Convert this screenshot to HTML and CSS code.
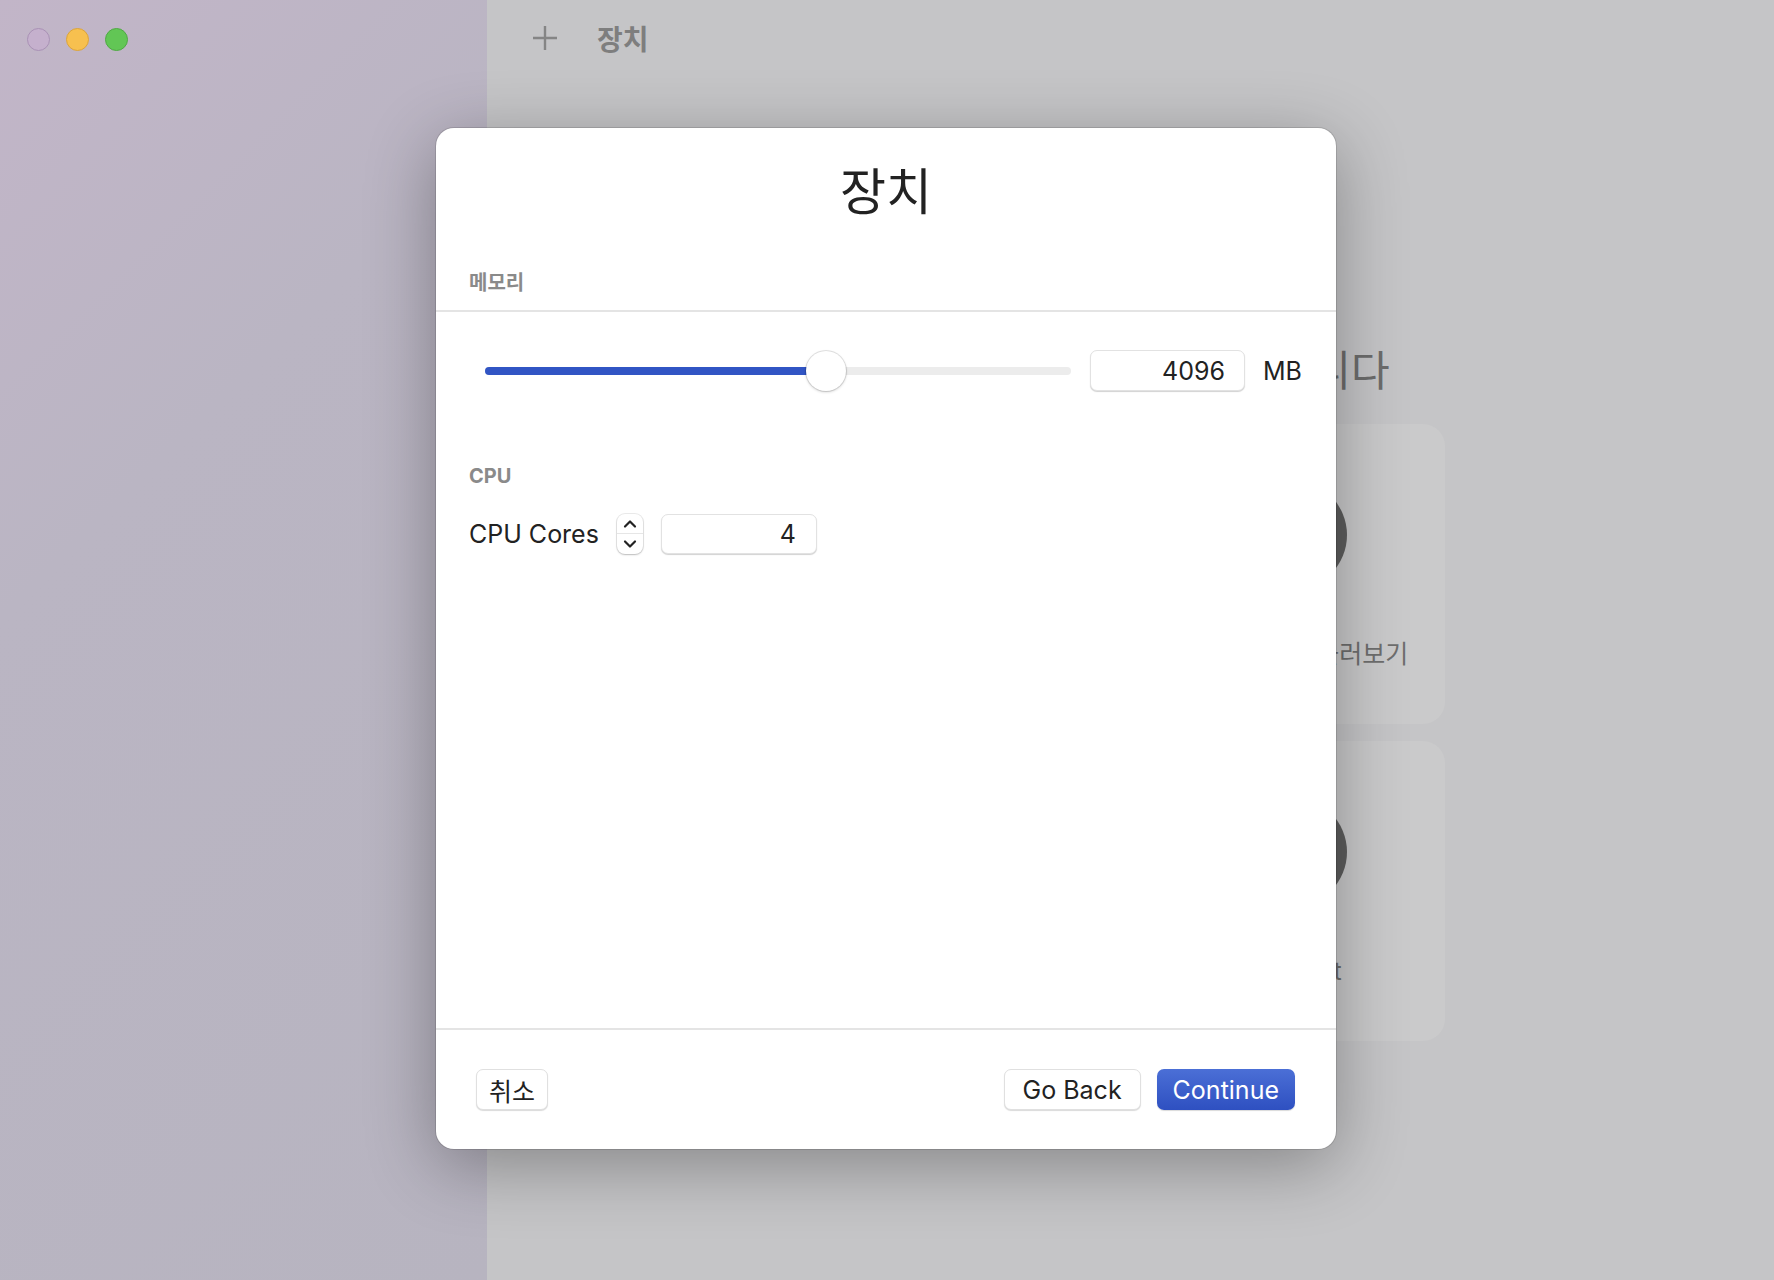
FILE: index.html
```html
<!DOCTYPE html>
<html lang="ko">
<head>
    <meta charset="UTF-8">
    <title>장치</title>
    <link rel="stylesheet" href="styles.css">
</head>
<body>
<div class="window">

    <!-- Sidebar -->
    <aside class="sidebar">
        <div class="traffic">
            <span class="light light-close"></span>
            <span class="light light-min"></span>
            <span class="light light-max"></span>
        </div>
    </aside>

    <!-- Main area (behind the sheet) -->
    <main class="main">
        <header class="toolbar">
            <svg class="toolbar-plus" width="26" height="26" viewBox="0 0 26 26">
                <path d="M13 1v24M1 13h24" stroke="currentColor" stroke-width="2.4" fill="none"/>
            </svg>
            <span class="toolbar-title">장치</span>
        </header>

        <section class="welcome">
            <h1 class="welcome-title">UTM에 오신 것을 환영합니다</h1>
            <div class="cards">
                <div class="card">
                    <div class="card-icon"></div>
                    <span class="card-label">새 가상 머신 만들기</span>
                </div>
                <div class="card">
                    <div class="card-icon"></div>
                    <span class="card-label">UTM 갤러리 둘러보기</span>
                </div>
                <div class="card">
                    <div class="card-icon"></div>
                    <span class="card-label">사용자 가이드</span>
                </div>
                <div class="card">
                    <div class="card-icon"></div>
                    <span class="card-label card-label-wide">Support</span>
                </div>
            </div>
        </section>
    </main>

    <!-- Sheet dialog -->
    <div class="sheet">
        <h2 class="sheet-title">장치</h2>

        <div class="group-label group-label-line">메모리</div>
        <div class="memory-row">
            <div class="slider">
                <div class="slider-fill" style="width: 58.2%"></div>
                <div class="slider-knob" style="left: 58.2%"></div>
            </div>
            <input class="field field-memory" type="text" value="4096">
            <span class="unit">MB</span>
        </div>

        <div class="group-label group-label-cpu">CPU</div>
        <div class="cpu-row">
            <span class="cpu-text">CPU Cores</span>
            <div class="stepper">
                <svg width="14" height="10" viewBox="0 0 14 10"><path d="M2 7.5L7 2.5l5 5" stroke="#222" stroke-width="2.2" fill="none" stroke-linecap="round" stroke-linejoin="round"/></svg>
                <div class="stepper-divider"></div>
                <svg width="14" height="10" viewBox="0 0 14 10"><path d="M2 2.5L7 7.5l5-5" stroke="#222" stroke-width="2.2" fill="none" stroke-linecap="round" stroke-linejoin="round"/></svg>
            </div>
            <input class="field field-cpu" type="text" value="4">
        </div>

        <div class="sheet-spacer"></div>

        <footer class="sheet-footer">
            <button class="btn btn-cancel">취소</button>
            <div class="footer-right">
                <button class="btn btn-back">Go Back</button>
                <button class="btn btn-primary">Continue</button>
            </div>
        </footer>
    </div>

</div>
</body>
</html>
```

FILE: styles.css
```css
/* Colors */
:root {
    --sidebar-color: #b8b5c2;
    --main-color: #c5c5c7;
    --card-color: #cacacb;
    --text-color: #222;
    --label-color: #8a8a8a;
    --line-color: #e4e4e4;
    --blue-color: #3155c4;
}

* {
    margin: 0;
    padding: 0;
    box-sizing: border-box;
}

body {
    font-family: Inter, "Noto Sans CJK KR", sans-serif;
    color: var(--text-color);
    width: 1774px;
    height: 1280px;
    overflow: hidden;
}

.window {
    position: relative;
    display: flex;
    width: 1774px;
    height: 1280px;
}

/* Sidebar */
.sidebar {
    width: 487px;
    flex-shrink: 0;
    background: linear-gradient(135deg, #c2b5c8 0%, #bab5c3 35%, #b7b4c0 100%);
}

.traffic {
    display: flex;
    gap: 16px;
    padding: 28px 0 0 27px;
}

.light {
    width: 23px;
    height: 23px;
    border-radius: 50%;
}

.light-close {
    background: #c5b0cd;
    border: 1px solid #a991b5;
}

.light-min {
    background: #f7c04f;
    border: 1px solid #dca43a;
}

.light-max {
    background: #62c655;
    border: 1px solid #4fa944;
}

/* Main */
.main {
    flex: 1;
    background: var(--main-color);
}

.toolbar {
    height: 76px;
    display: flex;
    align-items: center;
    padding-left: 45px;
    color: #858585;
}

.toolbar-plus {
    margin-right: 39px;
}

.toolbar-title {
    font-size: 28px;
    font-weight: bold;
    color: #7e7e7e;
}

.welcome {
    display: flex;
    flex-direction: column;
    align-items: center;
}

.welcome-title {
    margin-top: 270px;
    font-size: 42px;
    line-height: 50px;
    font-weight: normal;
    color: #6c6c6c;
}

.cards {
    margin-top: 28px;
    display: grid;
    grid-template-columns: 306px 306px;
    gap: 17px;
}

.card {
    height: 300px;
    background: var(--card-color);
    border-radius: 22px;
    display: flex;
    flex-direction: column;
    align-items: center;
    padding-top: 56px;
}

.card-icon {
    width: 110px;
    height: 110px;
    border-radius: 50%;
    background: #5e5e5e;
}

.card-label {
    margin-top: 49px;
    font-size: 25px;
    line-height: 30px;
    color: #6e6e6e;
}

.card-label-wide {
    letter-spacing: 1px;
}

/* Sheet */
.sheet {
    position: absolute;
    top: 128px;
    left: 436px;
    width: 900px;
    height: 1021px;
    background: #fff;
    border-radius: 18px;
    box-shadow: 0 0 0 1px rgba(0, 0, 0, 0.12), 0 16px 70px rgba(0, 0, 0, 0.32);
    display: flex;
    flex-direction: column;
}

.sheet-title {
    margin-top: 34px;
    text-align: center;
    font-size: 50px;
    line-height: 60px;
    font-weight: normal;
    color: #222;
}

.group-label {
    font-size: 20px;
    line-height: 24px;
    font-weight: bold;
    color: var(--label-color);
    padding-left: 33px;
}

.group-label-line {
    margin-top: 49px;
    padding-bottom: 15px;
    border-bottom: 2px solid var(--line-color);
}

.memory-row {
    margin-top: 38px;
    height: 41px;
    display: flex;
    align-items: center;
    padding: 0 33px 0 49px;
}

.slider {
    position: relative;
    width: 586px;
    height: 8px;
    border-radius: 4px;
    background: #ececec;
}

.slider-fill {
    height: 100%;
    border-radius: 4px;
    background: var(--blue-color);
}

.slider-knob {
    position: absolute;
    top: 50%;
    width: 40px;
    height: 40px;
    margin: -20px 0 0 -20px;
    border-radius: 50%;
    background: #fff;
    box-shadow: 0 0 0 1px rgba(0, 0, 0, 0.1), 0 1px 3px rgba(0, 0, 0, 0.2);
}

.field {
    height: 41px;
    border: 1px solid #e2e2e2;
    border-radius: 7px;
    box-shadow: 0 1px 1px rgba(0, 0, 0, 0.18);
    font-family: Inter, sans-serif;
    font-size: 25px;
    color: var(--text-color);
    text-align: right;
    padding-right: 19px;
    outline: none;
}

.field-memory {
    width: 155px;
    margin-left: 19px;
}

.unit {
    margin-left: 18px;
    font-size: 25px;
}

.group-label-cpu {
    margin-top: 73px;
}

.cpu-row {
    margin-top: 26px;
    display: flex;
    align-items: center;
    padding-left: 33px;
}

.cpu-text {
    font-size: 25px;
}

.stepper {
    margin-left: 18px;
    width: 26px;
    height: 40px;
    border-radius: 8px;
    background: #fff;
    box-shadow: 0 0 0 1px rgba(0, 0, 0, 0.08), 0 1px 2px rgba(0, 0, 0, 0.2);
    display: flex;
    flex-direction: column;
    align-items: center;
    justify-content: space-around;
    padding: 3px 0;
}

.stepper-divider {
    width: 100%;
    height: 1px;
    background: #e6e6e6;
}

.field-cpu {
    width: 156px;
    height: 40px;
    margin-left: 18px;
    padding-right: 20px;
}

.sheet-spacer {
    flex: 1;
}

.sheet-footer {
    border-top: 2px solid var(--line-color);
    display: flex;
    justify-content: space-between;
    align-items: center;
    padding: 39px 41px 39px 40px;
}

.footer-right {
    display: flex;
    gap: 16px;
}

.btn {
    height: 41px;
    padding: 0 16px;
    font-family: Inter, "Noto Sans CJK KR", sans-serif;
    font-size: 25px;
    color: var(--text-color);
    background: #fff;
    border: 1px solid #e0e0e0;
    border-radius: 7px;
    box-shadow: 0 1px 1px rgba(0, 0, 0, 0.15);
}

.btn-cancel {
    padding: 0 12px;
}

.btn-back {
    padding: 0 18px;
}

.btn-primary {
    color: #fff;
    border: none;
    background: linear-gradient(#4b6fd6, #2e50c1);
}
```
